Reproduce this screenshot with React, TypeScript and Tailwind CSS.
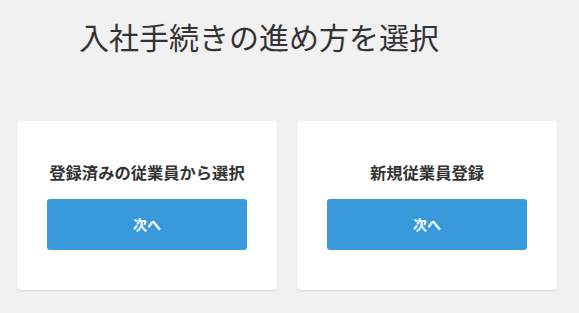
import React from 'react';

const font = { fontFamily: '"Noto Sans CJK JP", "Noto Sans", sans-serif' };

function ChoiceCard({ title }: { title: string }) {
  return (
    <div className="flex w-[260px] h-[169px] flex-col items-center rounded bg-white shadow-[0_1px_2px_rgba(0,0,0,0.12)]">
      <h2 className="mt-[39px] text-[16.3px] leading-6 font-bold text-[#333]">{title}</h2>
      <button className="mt-[15px] h-[51px] w-[200px] rounded-[3px] bg-[#3899db] text-[14px] font-bold text-white">
        次へ
      </button>
    </div>
  );
}

export default function App() {
  return (
    <div className="min-h-[313px] w-[579px] bg-[#f1f1f1]" style={font}>
      <h1 className="pl-[79px] pt-[15px] text-[30px] leading-[42px] font-normal text-[#333]">
        入社手続きの進め方を選択
      </h1>
      <div className="mt-[64px] flex gap-5 pl-[17px]">
        <ChoiceCard title="登録済みの従業員から選択" />
        <ChoiceCard title="新規従業員登録" />
      </div>
    </div>
  );
}
